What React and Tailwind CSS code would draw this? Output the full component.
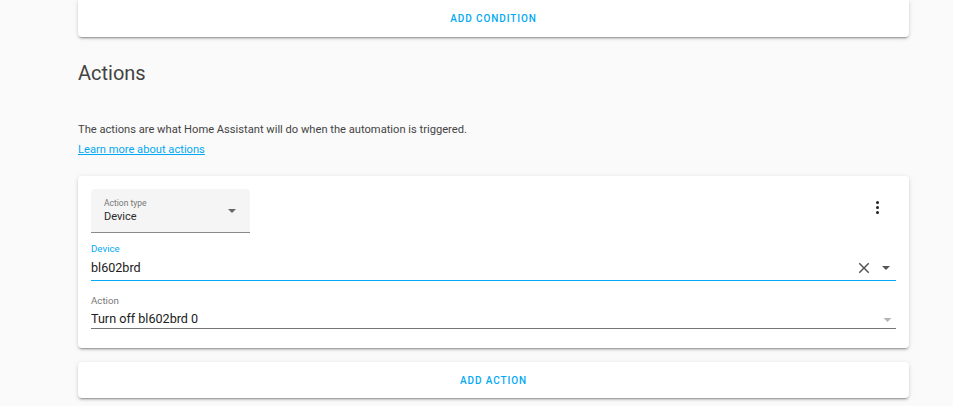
import React from 'react';

const cardShadow =
  'shadow-[0_2px_2px_0_rgba(0,0,0,0.14),0_1px_5px_0_rgba(0,0,0,0.12),0_3px_1px_-2px_rgba(0,0,0,0.2)]';

const ArrowDown = ({ className }) => (
  <svg viewBox="0 0 10 5" className={className}>
    <path d="M0 0 L10 0 L5 5 Z" fill="currentColor" />
  </svg>
);

const App = () => {
  return (
    <div className="min-h-[406px] bg-[#fafafa] font-['Roboto',sans-serif] overflow-hidden">
      <div className="ml-[78px] w-[831px]">
        {/* Conditions footer card */}
        <div className={`h-[37px] bg-white rounded-b-[4px] flex items-center justify-center ${cardShadow}`}>
          <span className="text-[10px] font-medium tracking-[0.9px] text-[#03a9f4]">ADD CONDITION</span>
        </div>

        {/* Actions header */}
        <h2 className="mt-[24px] text-[20px] leading-[24px] text-[#434343] font-normal">Actions</h2>
        <p className="mt-[37px] text-[11.15px] leading-[16px] text-[#444]">
          The actions are what Home Assistant will do when the automation is triggered.
        </p>
        <a href="#" className="block mt-[4px] text-[11.15px] leading-[16px] text-[#03a9f4] underline">
          Learn more about actions
        </a>

        {/* Action card */}
        <div className={`mt-[18px] bg-white rounded-[4px] px-[13px] pt-[13px] pb-[19px] ${cardShadow}`}>
          <div className="flex items-start justify-between">
            <div className="w-[159px] h-[44px] bg-[#f5f5f5] rounded-t-[4px] border-b border-[#8a8a8a] flex items-center pl-[13px] pr-[14px]">
              <div className="flex-1">
                <div className="text-[8.5px] leading-[11px] text-[#777] mt-[2px]">Action type</div>
                <div className="text-[11px] leading-[16px] text-[#2a2a2a]">Device</div>
              </div>
              <ArrowDown className="w-[8px] h-[4px] text-[#666]" />
            </div>
            <div className="w-[24px] h-[24px] mt-[6px] mr-[7px] flex flex-col items-center justify-center gap-[2px]">
              <span className="w-[3px] h-[3px] rounded-full bg-[#222]" />
              <span className="w-[3px] h-[3px] rounded-full bg-[#222]" />
              <span className="w-[3px] h-[3px] rounded-full bg-[#222]" />
            </div>
          </div>

          {/* Device field */}
          <div className="mt-[10px] border-b border-[#03a9f4]">
            <div className="text-[9.7px] leading-[12px] text-[#03a9f4]">Device</div>
            <div className="flex items-center h-[25px]">
              <span className="flex-1 text-[12.6px] leading-[18px] text-[#212121]">bl602brd</span>
              <svg viewBox="0 0 24 24" className="w-[18px] h-[18px] text-[#555] mr-[9px]">
                <path
                  d="M19 6.41 17.59 5 12 10.59 6.41 5 5 6.41 10.59 12 5 17.59 6.41 19 12 13.41 17.59 19 19 17.59 13.41 12z"
                  fill="currentColor"
                />
              </svg>
              <ArrowDown className="w-[8px] h-[4px] text-[#555] mr-[6px]" />
            </div>
          </div>

          {/* Action field */}
          <div className="mt-[14px] border-b border-[#757575]">
            <div className="text-[9.7px] leading-[12px] text-[#777]">Action</div>
            <div className="flex items-start h-[21px] pt-[3px]">
              <span className="flex-1 text-[12.6px] leading-[18px] text-[#212121]">Turn off bl602brd 0</span>
              <ArrowDown className="w-[9px] h-[4px] text-[#b5b5b5] mt-[8px] mr-[4px]" />
            </div>
          </div>
        </div>

        {/* Add action card */}
        <div className={`mt-[14px] h-[36px] bg-white rounded-[4px] flex items-center justify-center ${cardShadow}`}>
          <span className="text-[10px] font-medium tracking-[0.9px] text-[#03a9f4]">ADD ACTION</span>
        </div>
      </div>
    </div>
  );
};

export default App;
